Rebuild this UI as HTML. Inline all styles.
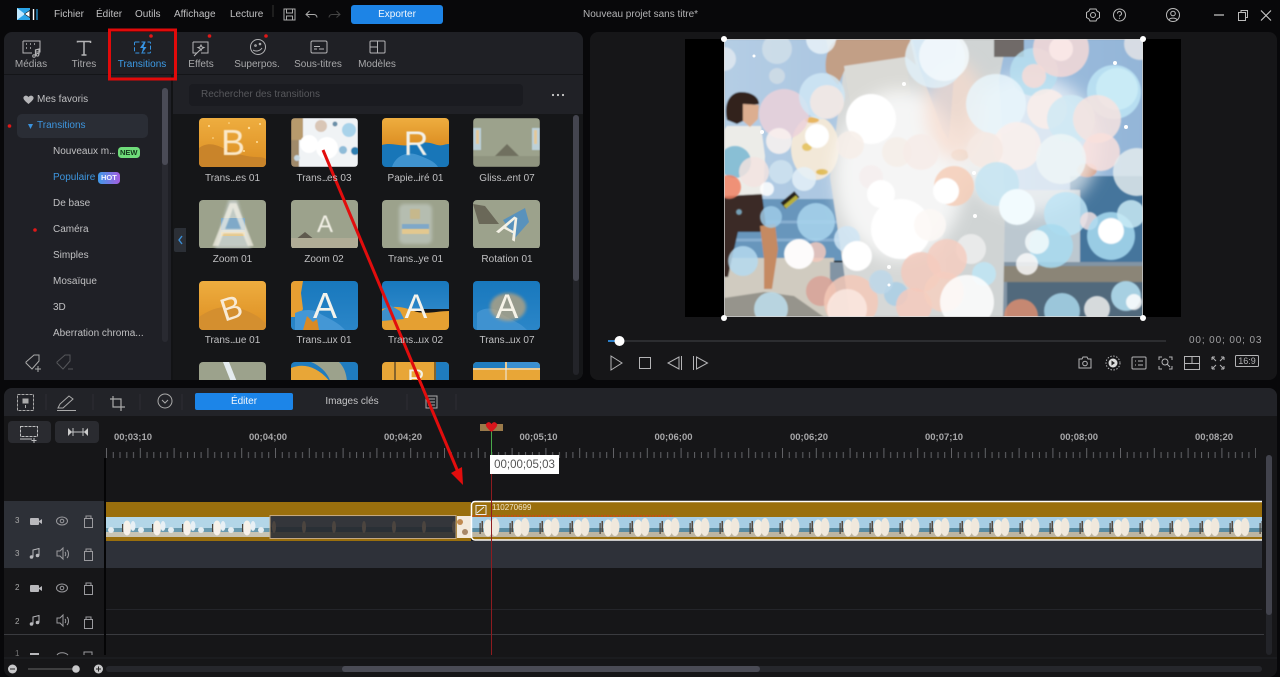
<!DOCTYPE html>
<html lang="fr"><head><meta charset="utf-8"><title>Nouveau projet sans titre</title>
<style>
html,body{margin:0;padding:0;background:#08080a;width:1280px;height:677px;overflow:hidden}
body{position:relative;font:10px "Liberation Sans",sans-serif;color:#c0c0c2}
#w{position:absolute;left:0;top:0;width:1280px;height:677px;filter:blur(.35px)}
.a{position:absolute}
.t{position:absolute;white-space:nowrap;line-height:14px}
.c{transform:translateX(-50%)}
.d{letter-spacing:-1px}
svg{position:absolute;left:0;top:0}
</style></head><body><div id="w">
<svg width="1280" height="677" viewBox="0 0 1280 677">
<defs>
<clipPath id="img"><rect x="724" y="39" width="419" height="278"/></clipPath>
<clipPath id="th"><rect width="67" height="49" rx="4"/></clipPath>
<clipPath id="gridclip"><rect x="173" y="115" width="400" height="265"/></clipPath>
<pattern id="ticks" x="106" y="448" width="33.8" height="11" patternUnits="userSpaceOnUse">
<path d="M.5 0V10M7.26 4V10M14 4V10M20.8 4V10M27.5 4V10" stroke="#626367" stroke-width="1" fill="none"/>
</pattern>
<pattern id="filmL" x="106" y="517" width="30" height="20" patternUnits="userSpaceOnUse">
<rect width="30" height="20" fill="#b3d6e8"/><rect y="11" width="30" height="4" fill="#6a9bb0"/><rect y="15" width="30" height="5" fill="#c8c4b4"/>
<ellipse cx="21" cy="11" rx="4" ry="7.500" fill="#f6f1ea"/><rect x="16" y="7" width="1.200" height="8" fill="#4c443c"/><ellipse cx="27" cy="9" rx="2.500" ry="5" fill="#e8f0f5"/><ellipse cx="5" cy="13" rx="3" ry="3" fill="#e4ecf0"/>
</pattern>
<pattern id="filmD" x="106" y="517" width="30" height="20" patternUnits="userSpaceOnUse">
<rect width="30" height="20" fill="#34363b"/><rect y="10" width="30" height="5" fill="#2a3036"/><rect y="15" width="30" height="5" fill="#3a3a38"/>
<ellipse cx="18" cy="10" rx="2" ry="6" fill="#4c453f"/>
</pattern>
<pattern id="filmR" x="471" y="517" width="30" height="20" patternUnits="userSpaceOnUse">
<rect width="30" height="20" fill="#a6cde4"/><rect y="11" width="30" height="4" fill="#5a8ca3"/><rect y="15" width="30" height="5" fill="#bdb5a2"/>
<ellipse cx="17" cy="11" rx="4.500" ry="8.500" fill="#f4eee3"/><ellipse cx="24" cy="10" rx="4.500" ry="9" fill="#efe8dc"/><rect x="8.500" y="6" width="1.200" height="11" fill="#4a3e36"/><rect x="10.500" y="4" width="1.500" height="11" fill="#5a483c"/>
</pattern>
<linearGradient id="org" x1="0" y1="0" x2="0" y2="1"><stop offset="0" stop-color="#eead3f"/><stop offset="1" stop-color="#dc8e22"/></linearGradient>
<linearGradient id="blu" x1="0" y1="0" x2="0" y2="1"><stop offset="0" stop-color="#1878bd"/><stop offset="1" stop-color="#2b86c8"/></linearGradient>
<linearGradient id="hot" x1="0" x2="1"><stop offset="0" stop-color="#3f9ae8"/><stop offset="1" stop-color="#a45ee0"/></linearGradient>
<linearGradient id="sky" x1="0" x2="1"><stop offset="0" stop-color="#b4cde4"/><stop offset="1" stop-color="#93b5d8"/></linearGradient>
<filter id="b1"><feGaussianBlur stdDeviation=".5"/></filter>
<filter id="b2"><feGaussianBlur stdDeviation="1.600"/></filter>
<filter id="b3"><feGaussianBlur stdDeviation=".8"/></filter>
<filter id="b8" x="-30%" y="-30%" width="160%" height="160%"><feGaussianBlur stdDeviation="8"/></filter>
</defs>

<!-- panels -->
<rect x="4" y="32" width="579" height="348" rx="8" fill="#1f2025"/>
<rect x="4" y="74" width="579" height="1" fill="#141518"/>
<rect x="4" y="75" width="168" height="305" fill="#1f2026"/>
<rect x="173" y="75" width="410" height="40" fill="#202126"/>
<path d="M173 114H583V372a8 8 0 0 1-8 8H173Z" fill="#151618"/>
<rect x="171" y="75" width="2" height="305" fill="#121315"/>
<rect x="590" y="32" width="687" height="348" rx="8" fill="#161618"/>
<rect x="4" y="388" width="1273" height="289" rx="8" fill="#161618"/>
<path d="M4 416V396a8 8 0 0 1 8-8H1269a8 8 0 0 1 8 8V416Z" fill="#222328"/>

<!-- sidebar -->
<rect x="17" y="114" width="131" height="24" rx="5" fill="#2a2d35"/>
<rect x="162" y="88" width="6" height="254" rx="3" fill="#292a31"/>
<rect x="162" y="88" width="6" height="77" rx="3" fill="#4a4b56"/>
<rect x="189" y="84" width="334" height="22" rx="4" fill="#1a1b20"/>
<rect x="573" y="115" width="6" height="260" rx="3" fill="#232429"/>
<rect x="573" y="115" width="6" height="166" rx="3" fill="#44454f"/>
<path d="M176 228h10v24h-10a2 2 0 0 1-2-2v-20a2 2 0 0 1 2-2Z" fill="#2b2f36"/>
<path d="M182 236l-3 4 3 4" stroke="#3b8fd8" stroke-width="1.400" fill="none"/>
<circle cx="553" cy="95" r="1.100" fill="#ccc"/><circle cx="558" cy="95" r="1.100" fill="#ccc"/><circle cx="563" cy="95" r="1.100" fill="#ccc"/>
<path d="M24 96.500c1.700-1.700 3.700-.7 4.500.6.800-1.300 2.800-2.300 4.500-.6 1.500 1.800.2 3.700-4.500 7.500-4.700-3.800-6-5.700-4.500-7.500Z" fill="#b5b5b8"/>
<path d="M28 124l5 0-2.500 5Z" fill="#3b92dc"/>
<circle cx="9.500" cy="126" r="1.800" fill="#e01818"/><circle cx="35" cy="230" r="1.800" fill="#e01818"/>
<circle cx="151" cy="36" r="1.800" fill="#e01818"/><circle cx="209.500" cy="36" r="1.800" fill="#e01818"/><circle cx="266" cy="36" r="1.800" fill="#e01818"/>
<path d="M26 362l8-7h5v6l-7 8-6-6Z" stroke="#aaa" fill="none"/><path d="M38 366v6M35 369h6" stroke="#aaa" fill="none"/>
<path d="M57 362l8-7h5v6l-7 8-6-6Z" stroke="#55565a" fill="none"/><path d="M68 369h5" stroke="#55565a"/>
<rect x="118" y="147" width="22" height="11" rx="3.500" fill="#6fdc7a"/>
<rect x="98" y="172" width="22" height="12" rx="3.500" fill="url(#hot)"/>

<!-- top bar icons -->
<path d="M17 8h13v12H17Z" fill="#2aa4e8"/><path d="M17 8l8 6-8 6Z" fill="#bfe8ff"/><path d="M24 14l6-4v8Z" fill="#0d0d10"/><path d="M25 14l4.500-3v6Z" fill="#fff"/>
<path d="M33.500 9v11" stroke="#fff" stroke-width="1.400"/><path d="M37 9v11" stroke="#2aa4e8" stroke-width="1.200"/>
<path d="M273 5v12" stroke="#333"/>
<path d="M284 9h11v11h-11ZM286.500 9v4h6V9M286.500 20v-4h6v4" stroke="#aaa" fill="none"/>
<path d="M306 14.500h8a3 3 0 0 1 3 3M309.500 11l-3.500 3.500 3.500 3" stroke="#aaa" fill="none"/>
<path d="M340 14.500h-8a3 3 0 0 0-3 3M336.500 11l3.500 3.500-3.500 3" stroke="#444" fill="none"/>
<rect x="351" y="5" width="92" height="19" rx="3" fill="#1d84e6"/>
<circle cx="1093" cy="15" r="2.500" stroke="#bbb" fill="none"/><path d="M1090 9h6l1 2 2.500 1.500v5l-2.500 1.500-1 2h-6l-1-2-2.500-1.500v-5l2.500-1.500Z" stroke="#bbb" fill="none"/>
<circle cx="1119.500" cy="15" r="6" stroke="#bbb" fill="none"/><path d="M1117.500 13.500a2 2 0 1 1 2.800 1.800c-.6.3-.8.7-.8 1.200" stroke="#bbb" fill="none"/><circle cx="1119.500" cy="18.200" r=".6" fill="#bbb"/>
<circle cx="1173" cy="15" r="6.500" stroke="#bbb" fill="none"/><circle cx="1173" cy="13.500" r="2.300" stroke="#bbb" fill="none"/><path d="M1169 20c.5-2.500 7.500-2.500 8 0" stroke="#bbb" fill="none"/>
<path d="M1214 15h10" stroke="#ccc" stroke-width="1.200"/>
<path d="M1238.500 12.500h7v8h-7ZM1241 12v-1.500h6.500v7H1246" stroke="#bbb" fill="none"/>
<path d="M1261 10.500l10 10M1271 10.500l-10 10" stroke="#ccc" stroke-width="1.100"/>

<!-- tab icons -->
<g stroke="#b4b4b6" fill="none">
<path d="M23 41h17v11h-4M23 41v12h9"/><path d="M26 44h1M30 44h1M34 44h1M26 48h1M30 48h1" stroke-width="1.500"/><path d="M35.500 56v-6l3.500-1v5.500" stroke-width="1.200"/><circle cx="34" cy="56" r="1.300"/><circle cx="37.500" cy="54.800" r="1.300"/>
<path d="M77.500 42.500v-1h13v1.500M84 41.500v13.500M81.500 55h5" stroke-width="1.500"/>
<rect x="134.500" y="42" width="16" height="11" rx="1" stroke="#3794e2" stroke-dasharray="4 2"/>
<path d="M193 42h15v11h-7M193 42v11h4"/><path d="M194 56l6-6M201 45l1 2 2 .500-2 1-1 2-1-2-2-1 2-.500Z"/>
<circle cx="258" cy="47" r="7.500"/><path d="M253 50c3 2 7 1 9-2"/><circle cx="255.500" cy="45.500" r=".8"/><circle cx="260" cy="44" r=".8"/>
<rect x="311" y="41" width="16" height="12" rx="1.500"/><path d="M314 49h3M319 49h5M314 46.500h6"/>
<rect x="370" y="41" width="15" height="12" rx="1"/><path d="M377.500 41v12M370 47h7.500"/>
</g>
<path d="M144 42l-4 6h3l-1.500 6 5-7h-3l2-5Z" fill="#3794e2"/>

<!-- red selection -->
<rect x="109.500" y="30" width="66" height="49" fill="none" stroke="#e10a0a" stroke-width="3"/>

<!-- thumbnails -->
<g clip-path="url(#gridclip)" font-family="Liberation Sans,sans-serif">
<g transform="translate(199 118)" clip-path="url(#th)">
<rect width="67" height="49" fill="url(#org)"/><path d="M0 30c8-6 16-4 24 0 8 4 14 6 24 8s14 0 19 3v8H0Z" fill="#c9842a"/>
<g fill="#ffdf9c"><circle cx="10" cy="8" r="1"/><circle cx="50" cy="10" r="1.200"/><circle cx="58" cy="24" r="1"/><circle cx="45" cy="33" r="1"/><circle cx="14" cy="20" r=".8"/><circle cx="30" cy="5" r=".8"/><circle cx="61" cy="6" r="1"/></g>
<text x="34" y="37" font-size="36" fill="#fbe8c8" text-anchor="middle" filter="url(#b1)">B</text></g>
<g transform="translate(291 118)" clip-path="url(#th)" filter="url(#b1)">
<rect width="67" height="49" fill="#f0f3f5"/><rect width="12" height="22" fill="#b79a6c"/><rect y="22" width="8" height="27" fill="#a08a6a"/>
<circle cx="58" cy="12" r="7" fill="#a9d3ea"/><circle cx="64" cy="33" r="4" fill="#2f7fb0"/><circle cx="52" cy="32" r="4" fill="#8fbcd8"/><circle cx="30" cy="8" r="6" fill="#d9c6b6"/><circle cx="18" cy="26" r="9" fill="#fff"/><circle cx="36" cy="30" r="11" fill="#fff"/><circle cx="44" cy="6" r="2.500" fill="#6a8fa8"/><circle cx="6" cy="40" r="3" fill="#c8d8e2"/></g>
<g transform="translate(382 118)" clip-path="url(#th)">
<rect width="67" height="28" fill="url(#org)"/><path d="M0 27c10-3 18 2 28 0s16-4 24-1 10 0 15 0v23H0Z" fill="#1876b8"/><path d="M10 49c4-12 16-16 26-12s16 6 20 12Z" fill="#3f93cf"/>
<text x="34" y="37" font-size="34" fill="#f3f1ea" text-anchor="middle" filter="url(#b1)">R</text></g>
<g transform="translate(473 118)" clip-path="url(#th)" filter="url(#b1)">
<rect width="67" height="49" fill="#9ca28c"/><rect x="0" y="10" width="8" height="22" fill="#bcd0d8"/><rect x="59" y="10" width="8" height="22" fill="#bcd0d8"/><rect x="3" y="12" width="3" height="14" fill="#e3c898"/><rect x="61" y="12" width="3" height="14" fill="#e3c898"/><path d="M20 40l14-14 14 14Z" fill="#6f6f5f"/><rect y="38" width="67" height="11" fill="#8f947f"/></g>
<g transform="translate(199 200)" clip-path="url(#th)">
<rect width="67" height="48" fill="#9ca28c"/><path d="M16 48l14-48h8l14 48Z" fill="#dbe4ea" opacity=".6" filter="url(#b2)"/><rect x="22" y="18" width="24" height="12" fill="#7fa9c8"/><rect x="22" y="32" width="24" height="4" fill="#e5c98f"/><text x="34" y="46" font-size="62" fill="#f4f1e5" text-anchor="middle" opacity=".7" filter="url(#b3)">A</text></g>
<g transform="translate(291 200)" clip-path="url(#th)">
<rect width="67" height="48" fill="#9ca28c"/><path d="M4 40l10-8 10 8Z" fill="#5f5a4e"/><rect y="38" width="67" height="10" fill="#b0ac96"/><text x="34" y="32" font-size="24" fill="#f2f0e6" text-anchor="middle" filter="url(#b1)">A</text></g>
<g transform="translate(382 200)" clip-path="url(#th)">
<rect width="67" height="48" fill="#9ca28c"/><rect x="17" y="4" width="33" height="40" rx="5" fill="#b5bdb0" filter="url(#b2)"/><rect x="20" y="24" width="27" height="5" fill="#7fa8c8" filter="url(#b1)"/><rect x="20" y="29" width="27" height="5" fill="#e3c88f" filter="url(#b1)"/><rect x="28" y="9" width="10" height="10" fill="#c6b88c" filter="url(#b1)"/></g>
<g transform="translate(473 200)" clip-path="url(#th)">
<rect width="67" height="48" fill="#9ca28c"/><path d="M0 4l12 2 14 18-20 0Z" fill="#6a6858"/><path d="M30 20l22-12 4 14-14 16Z" fill="#4e8fc4" opacity=".85"/><text x="38" y="38" font-size="32" fill="#f4f1e5" text-anchor="middle" transform="rotate(28 38 26)">A</text></g>
<g transform="translate(199 281)" clip-path="url(#th)">
<rect width="67" height="49" fill="url(#org)"/><path d="M0 36c14-10 30-14 48-6s14 10 19 12v7H0Z" fill="#d48f2f"/><text x="32" y="38" font-size="32" fill="#f8ead4" text-anchor="middle" transform="rotate(-18 32 26)">B</text></g>
<g transform="translate(291 281)" clip-path="url(#th)">
<rect width="67" height="49" fill="url(#blu)"/><path d="M0 0h12l-2 12 2 16-4 8H0Z" fill="#e79f32"/><path d="M4 32c8-4 18-4 24 0s18 8 26 17H4Z" fill="#4497d5"/><path d="M12 49l4-14 6 6 4-3 2 11Z" fill="#d98a24"/><text x="34" y="37" font-size="36" fill="#f4f3ec" text-anchor="middle">A</text></g>
<g transform="translate(382 281)" clip-path="url(#th)">
<rect width="67" height="28" fill="url(#blu)"/><path d="M0 28c12-4 22-2 32 2s24 0 35 0v19H0Z" fill="#e5a032"/><path d="M0 30l8-6 10 6 4 8-22 2Z" fill="#3e90cc"/><text x="34" y="37" font-size="34" fill="#f4f3ec" text-anchor="middle">A</text></g>
<g transform="translate(473 281)" clip-path="url(#th)">
<rect width="67" height="49" fill="url(#blu)"/><path d="M4 32c6-6 18-6 24 0s18 8 26 17H4Z" fill="#3f92d0"/><ellipse cx="35" cy="26" rx="18" ry="14" fill="#c9a878" opacity=".7" filter="url(#b2)"/><text x="34" y="37" font-size="34" fill="#f6f3e8" text-anchor="middle">A</text></g>
<g transform="translate(199 362)" clip-path="url(#th)"><rect width="67" height="49" fill="#9ca28c"/><path d="M24 0h6l8 20h-6Z" fill="#e5ecef"/></g>
<g transform="translate(291 362)" clip-path="url(#th)"><rect width="67" height="49" fill="#1f7cbf"/><path d="M0 6c14-6 30 0 42 18H0Z" fill="#e8a637"/><path d="M20 0h28c6 6 8 14 8 22H40C38 12 30 4 20 0Z" fill="#9ca28c"/></g>
<g transform="translate(382 362)" clip-path="url(#th)"><rect width="67" height="49" fill="#e8a637"/><path d="M13 0v20M53 0v20" stroke="#222" stroke-width="1"/><rect x="54" width="13" height="20" fill="#1f7cbf"/><text x="34" y="24" font-size="24" fill="#f4f1e5" text-anchor="middle">R</text></g>
<g transform="translate(473 362)" clip-path="url(#th)"><rect width="67" height="49" fill="#e8a637"/><rect width="32" height="6" fill="#1f7cbf"/><rect x="34" width="33" height="6" fill="#3a8fd0"/><path d="M0 7h67M33 0v20" stroke="#eee" stroke-width="1"/></g>
</g>

<!-- preview -->
<rect x="685" y="39" width="496" height="278" fill="#000"/>
<g clip-path="url(#img)">
<g filter="url(#b3)">
<rect x="724" y="39" width="419" height="165" fill="url(#sky)"/>
<rect x="724" y="199" width="130" height="62" fill="#6796bc"/>
<path d="M724 222h130M724 240h130" stroke="#86add0" stroke-width="3"/>
<rect x="1070" y="176" width="73" height="92" fill="#44759c"/>
<rect x="960" y="190" width="120" height="90" fill="#bcc8d0"/>
<rect x="724" y="258" width="110" height="59" fill="#d0cbc0"/>
<path d="M724 298l40-6 30 4 30 21H724Z" fill="#96948c"/>
<rect x="830" y="262" width="313" height="55" fill="#8294a4"/>
<rect x="1000" y="266" width="143" height="16" fill="#8b8577"/>
<rect x="1007" y="282" width="136" height="35" fill="#51697c"/>
<!-- bride -->
<path d="M826 39h86l8 30 22 60 18 30-4 158H850l-8-60-12-80 14-110-14-10Z" fill="#d6d8d7"/>
<path d="M826 72c-2-16 4-30 12-33h72l6 26-10-8-60 10-8 18Z" fill="#c29f86"/>
<path d="M844 66l61-9 6 38-60 12Z" fill="#dadad6"/>
<!-- groom -->
<path d="M957 39h50l-8 40 6 130-2 108h-55l-6-100 8-90Z" fill="#d0d4d4"/>
<rect x="994" y="39" width="30" height="18" fill="#6f6a68"/>
<ellipse cx="960" cy="155" rx="9" ry="6" fill="#c59068"/>
<ellipse cx="1087" cy="170" rx="10" ry="7" fill="#c68a70"/>
<!-- left woman -->
<path d="M727 126h34l4 30-2 40-39 8V130Z" fill="#ecece8"/>
<path d="M724 196l38-2 4 30-6 8-22 0-10 45h-4Z" fill="#3a2c25"/>
<path d="M760 226l15-2 3 25-6 40-8 0 0-30Z" fill="#c58a62"/>
<path d="M727 120c-4-18 4-28 14-28 12 0 18 6 18 12l-10 2-4 14-8 4Z" fill="#33241c"/>
<path d="M743 104l16 1-1 14-8 8-7-6Z" fill="#dcae90"/>
<rect x="781" y="196" width="18" height="8" fill="#26221a" transform="rotate(-40 790 200)"/><rect x="783" y="200" width="16" height="4" fill="#b8b03a" transform="rotate(-40 791 202)"/>
<ellipse cx="815" cy="148" rx="24" ry="32" fill="#f2e8d8"/><ellipse cx="807" cy="147" rx="5" ry="4" fill="#e6c66a"/><ellipse cx="822" cy="172" rx="6" ry="3" fill="#e0bc58"/><ellipse cx="812" cy="120" rx="7" ry="3" fill="#e8b660"/>
</g>
<!-- soft white wash over the middle -->
<g filter="url(#b8)" fill="#fff">
<ellipse cx="900" cy="175" rx="65" ry="85" fill-opacity=".75"/>
<ellipse cx="1030" cy="145" rx="70" ry="70" fill-opacity=".65"/>
<ellipse cx="955" cy="110" rx="30" ry="50" fill="#f8dccd" fill-opacity=".7"/>
</g>
<g filter="url(#b3)" fill-opacity=".84">
<circle cx="777" cy="49" r="15" fill="#d0dfea"/><circle cx="821" cy="39" r="15" fill="#e8f2f8"/><circle cx="724" cy="59" r="12" fill="#e0e8f0"/><circle cx="777" cy="76" r="8" fill="#d0dce6"/>
<circle cx="784" cy="114" r="25" fill="#ecd2da"/><circle cx="822" cy="96" r="23" fill="#cfe7f5"/><circle cx="827" cy="102" r="17" fill="#f5e8e4"/><circle cx="779" cy="141" r="13" fill="#fbf3f0"/><circle cx="817" cy="136" r="12" fill="#fff" fill-opacity="1"/>
<circle cx="735" cy="162" r="16" fill="#76b6d2"/><circle cx="729" cy="187" r="12" fill="#ef7f62"/>
<circle cx="871" cy="119" r="25" fill="#fff" fill-opacity="1"/><circle cx="850" cy="145" r="14" fill="#f7eee8"/><circle cx="935" cy="58" r="30" fill="#e0f0f8"/><circle cx="944" cy="56" r="25" fill="#f4fafd"/>
<circle cx="754" cy="172" r="15" fill="#f3e4e0"/><circle cx="781" cy="172" r="12" fill="#cfe4f0"/><circle cx="804" cy="179" r="12" fill="#e5f1f8"/><circle cx="767" cy="189" r="7" fill="#fff"/><circle cx="739" cy="212" r="3" fill="#7fb5d0"/>
<circle cx="771" cy="217" r="11" fill="#9fcce8"/><circle cx="816" cy="222" r="19" fill="#a9d5ee"/><circle cx="816" cy="252" r="10" fill="#f3c8bc"/><circle cx="799" cy="254" r="15" fill="#fdfbfb" fill-opacity="1"/><circle cx="743" cy="261" r="15" fill="#b5daf0"/><circle cx="821" cy="291" r="15" fill="#d9a196"/>
<circle cx="851" cy="302" r="27" fill="#f4c8b8"/><circle cx="847" cy="309" r="20" fill="#fbe9e2"/><circle cx="771" cy="309" r="17" fill="#bfe0ef"/>
<circle cx="897" cy="152" r="15" fill="#f5eee8"/><circle cx="921" cy="152" r="18" fill="#f7ece8"/><circle cx="871" cy="177" r="12" fill="#f6eeee"/><circle cx="881" cy="194" r="14" fill="#fff" fill-opacity="1"/><circle cx="847" cy="239" r="13" fill="#cfe6f5"/><circle cx="901" cy="229" r="30" fill="#fff" fill-opacity="1"/><circle cx="857" cy="256" r="15" fill="#fff" fill-opacity="1"/><circle cx="930" cy="225" r="16" fill="#fdf8f6"/>
<circle cx="921" cy="272" r="20" fill="#f2c9bc"/><circle cx="896" cy="294" r="12" fill="#a9cee6"/><circle cx="881" cy="282" r="12" fill="#bcd8ea"/><circle cx="914" cy="306" r="18" fill="#f5c9bc"/>
<circle cx="1034" cy="72" r="24" fill="#b8dff0"/><circle cx="1034" cy="76" r="12" fill="#f8dcd8"/><circle cx="1061" cy="49" r="28" fill="#f5d9d6"/><circle cx="1061" cy="49" r="12" fill="#fdecea"/><circle cx="1114" cy="92" r="27" fill="#bfe6f5"/><circle cx="1117" cy="89" r="21" fill="#cceef8"/><circle cx="1140" cy="44" r="16" fill="#e4e4e6"/>
<circle cx="996" cy="104" r="30" fill="#e8f5fb"/><circle cx="1047" cy="109" r="20" fill="#fbeeea"/><circle cx="1071" cy="119" r="24" fill="#cfe9f4"/><circle cx="1097" cy="119" r="24" fill="#f7e4e0"/><circle cx="1101" cy="152" r="19" fill="#fae0dc"/>
<circle cx="1017" cy="146" r="24" fill="#fbf0ec"/><circle cx="1061" cy="159" r="25" fill="#eef5f7"/><circle cx="985" cy="150" r="18" fill="#f6eae4"/><circle cx="1137" cy="172" r="24" fill="#e4ecee"/>
<circle cx="954" cy="186" r="20" fill="#f6cdb8"/><circle cx="946" cy="191" r="13" fill="#fff" fill-opacity="1"/><circle cx="997" cy="184" r="22" fill="#c5e5f2"/><circle cx="1017" cy="207" r="18" fill="#f2fbfe" fill-opacity="1"/><circle cx="1066" cy="214" r="22" fill="#bfe5f5"/><circle cx="1089" cy="221" r="9" fill="#f0e0e2"/>
<circle cx="1111" cy="236" r="24" fill="#a9dcf2"/><circle cx="1131" cy="214" r="14" fill="#c9ebf6"/><circle cx="1111" cy="231" r="13" fill="#fff" fill-opacity="1"/><circle cx="1051" cy="246" r="22" fill="#a8dbf0"/><circle cx="1037" cy="242" r="12" fill="#f5fbfd"/><circle cx="1027" cy="264" r="11" fill="#fafafa"/><circle cx="971" cy="249" r="15" fill="#eeeeee"/><circle cx="984" cy="274" r="12" fill="#bfe6f5"/>
<circle cx="1126" cy="296" r="15" fill="#b8e4f5"/><circle cx="1134" cy="302" r="8" fill="#fff"/><circle cx="1062" cy="311" r="18" fill="#a9d8ec"/><circle cx="1021" cy="316" r="17" fill="#dc8e70"/><circle cx="944" cy="292" r="20" fill="#f5cfc0"/><circle cx="947" cy="259" r="20" fill="#f5cdc0"/><circle cx="967" cy="302" r="27" fill="#fff"/><circle cx="1097" cy="309" r="13" fill="#f0f0ee"/>
</g>
<g fill="#fff"><circle cx="754" cy="56" r="1.500"/><circle cx="904" cy="84" r="2"/><circle cx="762" cy="132" r="2"/><circle cx="889" cy="267" r="2"/><circle cx="889" cy="285" r="1.500"/><circle cx="975" cy="216" r="2"/><circle cx="974" cy="173" r="2"/><circle cx="1115" cy="63" r="2"/><circle cx="1126" cy="127" r="2"/></g>
</g>
<path d="M724.500 316.500V39.500H1142.500V316.500Z" fill="none" stroke="#dfdfdf" stroke-opacity=".7"/>
<g fill="#fff"><circle cx="724" cy="39" r="3"/><circle cx="1143" cy="39" r="3"/><circle cx="724" cy="318" r="3"/><circle cx="1143" cy="318" r="3"/></g>
<rect x="608" y="340" width="558" height="2" fill="#2c2d30"/><rect x="608" y="340" width="10" height="2" fill="#2b7fc9"/><circle cx="619.500" cy="341" r="5" fill="#fff"/>
<g stroke="#b4b4b6" fill="none">
<path d="M611 356l11 7-11 7Z"/><rect x="639.500" y="357.500" width="11" height="11"/>
<path d="M679 357v12l-11-6ZM681.500 356v14"/><path d="M696.500 357v12l11-6ZM693.500 356v14"/>
<path d="M1079 359h3l1-2h4l1 2h3v9h-12Z"/><circle cx="1085" cy="363.500" r="2.300"/>
<circle cx="1113" cy="363" r="7" stroke-dasharray="1.500 1.500"/>
<rect x="1132" y="357" width="14" height="12" rx="1"/><path d="M1135 361h1M1135 365h1M1138 361h5M1138 365h5"/>
<path d="M1159 360v-3h3M1172 360v-3h-3M1159 366v3h3M1172 366v3h-3"/><circle cx="1165" cy="362" r="3"/><path d="M1167 364l3 3"/>
<rect x="1184.500" y="356.500" width="15" height="13"/><path d="M1192 356.500v7M1184.500 363.500h15"/>
<path d="M1212 357l4 4M1224 357l-4 4M1212 369l4-4M1224 369l-4-4M1212 357h3M1212 357v3M1224 357h-3M1224 357v3M1212 369h3M1212 369v-3M1224 369h-3M1224 369v-3"/>
<rect x="1235.500" y="355.500" width="23" height="11" rx="1"/>
</g>
<circle cx="1113" cy="363" r="4.500" fill="#ddd"/><path d="M1111.500 360.500l3.500 2.500-3.500 2.500Z" fill="#222"/>

<!-- timeline toolbar -->
<g stroke="#aaa" fill="none">
<rect x="17.500" y="394.500" width="16" height="16" stroke-dasharray="3 1"/><rect x="23" y="399" width="5" height="4" fill="#aaa"/><path d="M25.500 405v3"/>
<path d="M58 408l2-4 9-8 4 3-10 9ZM57 410.500h19"/>
<path d="M113 396v11h12M110 399h11v12" stroke-width="1.200"/>
<circle cx="165" cy="401" r="7"/><path d="M162 400l3 3 3-3"/>
<rect x="426" y="396" width="11" height="12"/><path d="M428 399h7M428 402h7M428 405h7"/>
</g>
<path d="M46 394v16M93 394v16M140 394v16M182 394v16M407 394v16M456 394v16" stroke="#2d2e33"/>
<rect x="195" y="393" width="98" height="17" rx="2" fill="#1c85e8"/>
<rect x="8" y="421" width="43" height="22" rx="4" fill="#2a2b30"/><rect x="55" y="421" width="44" height="22" rx="4" fill="#2a2b30"/>
<g stroke="#c0c0c2" fill="none"><rect x="20.500" y="426.500" width="17" height="10" stroke-dasharray="3 1"/><path d="M20 439h12M34 438v5M31.500 440.500h5"/><path d="M69 432h18M73 428v8M83 428v8"/></g>
<path d="M68 428v8l4-4ZM88 428v8l-4-4Z" fill="#ccc"/>

<!-- ruler -->
<rect x="106" y="448" width="1150" height="11" fill="url(#ticks)"/>
<rect x="480" y="424" width="23" height="7" fill="#9a7a4a"/>
<path d="M491.500 431v27" stroke="#4aa84a"/>
<path d="M486 424c2-3 4-2 5.500 0 1.500-2 3.500-3 5.500 0 1 2-2 5-5.500 8-3.500-3-6.500-6-5.500-8Z" fill="#d8161c"/>

<!-- tracks -->
<rect x="4" y="501" width="100" height="67" fill="#2d3037"/>
<rect x="106" y="541" width="1156" height="27" fill="#2e3139"/>
<path d="M106 609.500H1262" stroke="#24252a"/><path d="M4 634.500H1264" stroke="#3a3b3f"/>
<rect x="104" y="458" width="2" height="197" fill="#050506"/>
<rect x="106" y="502" width="365" height="39" fill="#9a6f0d"/>
<rect x="106" y="517" width="164" height="20" fill="url(#filmL)"/>
<rect x="270" y="515.500" width="186" height="23" fill="url(#filmD)" stroke="#c4a880" stroke-width="1"/>
<rect x="457" y="516" width="14" height="22" fill="#f3eadc"/><circle cx="460" cy="522" r="3" fill="#c08a50"/><circle cx="465" cy="532" r="3" fill="#a88868"/>
<rect x="472" y="502" width="790" height="38" fill="#9a6f0d"/>
<rect x="472" y="517" width="790" height="20" fill="url(#filmR)"/>
<path d="M1262 501.500H475a3.500 3.500 0 0 0-3.500 3.500v31.500a3.500 3.500 0 0 0 3.500 3.500H1262" fill="none" stroke="#fff" stroke-width="1.500"/>
<path d="M472 516H674" stroke="#e23a1a" stroke-dasharray="2 1"/>
<rect x="476" y="505.500" width="10" height="9" fill="none" stroke="#eee"/><path d="M477 513l7-6" stroke="#eee"/>
<path d="M491.500 474V655" stroke="#8e1c20"/>
<rect x="490" y="455" width="69" height="19" fill="#fff"/>

<!-- track icons -->
<g stroke="#9a9a9e" fill="none">
<ellipse cx="62" cy="521" rx="5.500" ry="4"/><circle cx="62" cy="521" r="1.800"/>
<ellipse cx="62" cy="588" rx="5.500" ry="4"/><circle cx="62" cy="588" r="1.800"/>
<path d="M57 551v5h3l3 3v-11l-3 3ZM65 552c1 1 1 3 0 4M67 550c2 2 2 6 0 8"/>
<path d="M57 618v5h3l3 3v-11l-3 3ZM65 619c1 1 1 3 0 4M67 617c2 2 2 6 0 8"/>
<rect x="84.500" y="518.500" width="8" height="9"/><path d="M86 518v-2h5v2"/>
<rect x="84.500" y="551.500" width="8" height="9"/><path d="M86 551v-2h5v2"/>
<rect x="84.500" y="585.500" width="8" height="9"/><path d="M86 585v-2h5v2"/>
<rect x="84.500" y="619.500" width="8" height="9"/><path d="M86 619v-2h5v2"/>
<path d="M57 655c2-3 8-3 11 0M84 655v-3h8v3"/>
</g>
<g fill="#b8b8bc">
<rect x="30" y="518" width="9" height="7" rx="1"/><path d="M39 521l3-2v5l-3-2Z"/>
<rect x="30" y="585" width="9" height="7" rx="1"/><path d="M39 588l3-2v5l-3-2Z"/>
<rect x="30" y="653" width="9" height="2"/>
</g>
<g stroke="#b8b8bc" fill="none"><path d="M33 557v-7l6-1.500v7"/><path d="M33 624v-7l6-1.500v7"/></g>
<g fill="#b8b8bc"><circle cx="31.500" cy="557" r="1.800"/><circle cx="37.500" cy="555.500" r="1.800"/><circle cx="31.500" cy="624" r="1.800"/><circle cx="37.500" cy="622.500" r="1.800"/></g>

<!-- bottom bar -->
<path d="M4 658H1277" stroke="#202126"/>
<rect x="1266" y="455" width="6" height="200" rx="3" fill="#232429"/><rect x="1266" y="455" width="6" height="160" rx="3" fill="#42434d"/>
<rect x="106" y="666" width="1156" height="6" rx="3" fill="#26272c"/><rect x="342" y="666" width="418" height="6" rx="3" fill="#4a4b55"/>
<circle cx="12.500" cy="669" r="4.500" fill="#c8c8ca"/><path d="M10 669h5" stroke="#222"/>
<path d="M28 669h46" stroke="#666"/><circle cx="76" cy="669" r="3.800" fill="#c8c8ca"/>
<circle cx="98.500" cy="669" r="4.500" fill="#c8c8ca"/><path d="M96 669h5M98.500 666.500v5" stroke="#222"/>

<!-- arrow -->
<path d="M323 150L458 472" stroke="#e20d0d" stroke-width="3" fill="none"/>
<path d="M463 485L451 473 462 467Z" fill="#e20d0d"/>
</svg>

<!-- top text -->
<span class="t" style="left:54px;top:8px">Fichier</span>
<span class="t" style="left:96px;top:8px">Éditer</span>
<span class="t" style="left:135px;top:8px">Outils</span>
<span class="t" style="left:174px;top:8px">Affichage</span>
<span class="t" style="left:230px;top:8px">Lecture</span>
<span class="t c" style="left:397px;top:8px;color:#f2f7fc">Exporter</span>
<span class="t" style="left:583px;top:8px;color:#b4b4b6">Nouveau projet sans titre*</span>

<span class="t c" style="left:31px;top:58px;color:#a8a8aa">Médias</span>
<span class="t c" style="left:84px;top:58px;color:#a8a8aa">Titres</span>
<span class="t c" style="left:142px;top:58px;color:#3d9be6">Transitions</span>
<span class="t c" style="left:201px;top:58px;color:#a8a8aa">Effets</span>
<span class="t c" style="left:257px;top:58px;color:#a8a8aa">Superpos.</span>
<span class="t c" style="left:318px;top:58px;color:#a8a8aa">Sous-titres</span>
<span class="t c" style="left:377px;top:58px;color:#a8a8aa">Modèles</span>

<span class="t" style="left:37px;top:93px">Mes favoris</span>
<span class="t" style="left:37px;top:119px;color:#3d95de">Transitions</span>
<span class="t" style="left:53px;top:145px">Nouveaux m<span class="d">...</span></span>
<span class="t" style="left:120px;top:147px;font:bold 7.500px/11px 'Liberation Sans',sans-serif;color:#12381a">NEW</span>
<span class="t" style="left:53px;top:171px;color:#3d95de">Populaire</span>
<span class="t" style="left:101px;top:172px;font:bold 7.500px/12px 'Liberation Sans',sans-serif;color:#f2f2ff">HOT</span>
<span class="t" style="left:53px;top:197px">De base</span>
<span class="t" style="left:53px;top:223px">Caméra</span>
<span class="t" style="left:53px;top:249px">Simples</span>
<span class="t" style="left:53px;top:275px">Mosaïque</span>
<span class="t" style="left:53px;top:301px">3D</span>
<span class="t" style="left:53px;top:327px">Aberration chroma...</span>
<span class="t" style="left:201px;top:88px;color:#57585c">Rechercher des transitions</span>

<span class="t c" style="left:232.500px;top:172px">Trans<span class="d">...</span>es 01</span>
<span class="t c" style="left:324px;top:172px">Trans<span class="d">...</span>es 03</span>
<span class="t c" style="left:415.500px;top:172px">Papie<span class="d">...</span>iré 01</span>
<span class="t c" style="left:507px;top:172px">Gliss<span class="d">...</span>ent 07</span>
<span class="t c" style="left:232.500px;top:253px">Zoom 01</span>
<span class="t c" style="left:324px;top:253px">Zoom 02</span>
<span class="t c" style="left:415.500px;top:253px">Trans<span class="d">...</span>ye 01</span>
<span class="t c" style="left:507px;top:253px">Rotation 01</span>
<span class="t c" style="left:232.500px;top:334px">Trans<span class="d">...</span>ue 01</span>
<span class="t c" style="left:324px;top:334px">Trans<span class="d">...</span>ux 01</span>
<span class="t c" style="left:415.500px;top:334px">Trans<span class="d">...</span>ux 02</span>
<span class="t c" style="left:507px;top:334px">Trans<span class="d">...</span>ux 07</span>

<span class="t" style="left:1189px;top:334px;letter-spacing:.87px;color:#a0a0a2">00; 00; 00; 03</span>
<span class="t c" style="left:1247px;top:354px;font-size:9px;color:#b4b4b6">16:9</span>

<span class="t c" style="left:244px;top:395px;color:#f2f7fc">Éditer</span>
<span class="t c" style="left:352px;top:395px;color:#c4c4c6">Images clés</span>

<span class="t c" style="left:133px;top:431px;font-weight:bold;font-size:9.500px;color:#a8a8aa">00;03;10</span>
<span class="t c" style="left:268px;top:431px;font-weight:bold;font-size:9.500px;color:#a8a8aa">00;04;00</span>
<span class="t c" style="left:403px;top:431px;font-weight:bold;font-size:9.500px;color:#a8a8aa">00;04;20</span>
<span class="t c" style="left:538.500px;top:431px;font-weight:bold;font-size:9.500px;color:#a8a8aa">00;05;10</span>
<span class="t c" style="left:673.500px;top:431px;font-weight:bold;font-size:9.500px;color:#a8a8aa">00;06;00</span>
<span class="t c" style="left:809px;top:431px;font-weight:bold;font-size:9.500px;color:#a8a8aa">00;06;20</span>
<span class="t c" style="left:944px;top:431px;font-weight:bold;font-size:9.500px;color:#a8a8aa">00;07;10</span>
<span class="t c" style="left:1079px;top:431px;font-weight:bold;font-size:9.500px;color:#a8a8aa">00;08;00</span>
<span class="t c" style="left:1214px;top:431px;font-weight:bold;font-size:9.500px;color:#a8a8aa">00;08;20</span>
<span class="t c" style="left:524.500px;top:458px;font-size:11.500px;color:#555">00;00;05;03</span>
<span class="t" style="left:492px;top:502px;font-size:8px;line-height:12px;color:#f0e6cc">110270699</span>

<span class="t" style="left:15px;top:514px;font-size:8px;color:#aaa">3</span>
<span class="t" style="left:15px;top:547px;font-size:8px;color:#aaa">3</span>
<span class="t" style="left:15px;top:581px;font-size:8px;color:#aaa">2</span>
<span class="t" style="left:15px;top:615px;font-size:8px;color:#aaa">2</span>
<span class="t" style="left:15px;top:647px;font-size:8px;color:#777">1</span>
</div></body></html>
